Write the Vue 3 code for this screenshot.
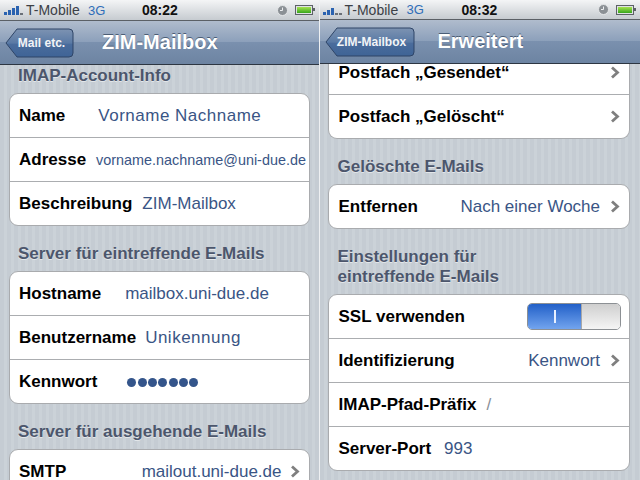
<script setup>
const phones = [
  {
    id: 'left',
    carrier: 'T-Mobile',
    time: '08:22',
    bars: [3, 5, 7, 9, 2],
    back: 'Mail etc.',
    title: 'ZIM-Mailbox',
    groups: [
      {
        label: ['IMAP-Account-Info'],
        rows: [
          { key: 'Name', value: 'Vorname Nachname', gap: 33, wide: true },
          { key: 'Adresse', value: 'vorname.nachname@uni-due.de', gap: 10, small: true },
          { key: 'Beschreibung', value: 'ZIM-Mailbox', gap: 10 }
        ]
      },
      {
        label: ['Server für eintreffende E-Mails'],
        rows: [
          { key: 'Hostname', value: 'mailbox.uni-due.de', gap: 24 },
          { key: 'Benutzername', value: 'Unikennung', gap: 9, wide: true },
          { key: 'Kennwort', dots: 7, gap: 30 }
        ]
      },
      {
        label: ['Server für ausgehende E-Mails'],
        rows: [{ key: 'SMTP', value: 'mailout.uni-due.de', chevron: true }]
      }
    ]
  },
  {
    id: 'right',
    carrier: 'T-Mobile',
    time: '08:32',
    bars: [3, 5, 7, 2, 2],
    back: 'ZIM-Mailbox',
    title: 'Erweitert',
    groups: [
      {
        cut: true,
        rows: [
          { key: 'Postfach „Gesendet“', chevron: true },
          { key: 'Postfach „Gelöscht“', chevron: true }
        ]
      },
      {
        label: ['Gelöschte E-Mails'],
        rows: [{ key: 'Entfernen', value: 'Nach einer Woche', chevron: true }]
      },
      {
        label: ['Einstellungen für', 'eintreffende E-Mails'],
        rows: [
          { key: 'SSL verwenden', toggle: true },
          { key: 'Identifizierung', value: 'Kennwort', chevron: true },
          { key: 'IMAP-Pfad-Präfix', value: '/', gap: 10, muted: true },
          { key: 'Server-Port', value: '993', gap: 13 }
        ]
      }
    ]
  }
]
</script>

<template>
  <div class="screens">
    <section v-for="phone in phones" :key="phone.id" class="phone" :class="phone.id">
      <div class="status">
        <div class="signal">
          <span v-for="(h, i) in phone.bars" :key="i" class="bar" :class="{ off: h === 2 }" :style="{ height: h + 'px' }"></span>
        </div>
        <span class="carrier">{{ phone.carrier }}</span>
        <span class="net">3G</span>
        <span class="time">{{ phone.time }}</span>
        <svg class="clock" width="11" height="11" viewBox="0 0 11 11">
          <circle cx="5.5" cy="5.5" r="5" fill="#8b9095" stroke="#e4e6e8" />
          <path d="M5.5 2.5 V5.5 H3" fill="none" stroke="#eceef0" stroke-width="1" />
        </svg>
        <span class="battery"><span class="charge"></span></span>
      </div>

      <header class="nav">
        <div class="back">
          <svg class="back-shape" width="100%" height="30" preserveAspectRatio="none" :viewBox="phone.id === 'left' ? '0 0 69 30' : '0 0 90 30'">
            <defs>
              <linearGradient :id="'bk-' + phone.id" x1="0" y1="0" x2="0" y2="1">
                <stop offset="0" stop-color="#7d93b2" />
                <stop offset="0.5" stop-color="#5a7aa5" />
                <stop offset="0.55" stop-color="#4a6c9c" />
                <stop offset="1" stop-color="#3f6496" />
              </linearGradient>
            </defs>
            <path
              :d="phone.id === 'left'
                ? 'M1 15 L12 1 H64 Q68 1 68 5 V25 Q68 29 64 29 H12 Z'
                : 'M1 15 L12 1 H85 Q89 1 89 5 V25 Q89 29 85 29 H12 Z'"
              :fill="'url(#bk-' + phone.id + ')'"
              stroke="#2f4567"
              vector-effect="non-scaling-stroke"
            />
          </svg>
          <span class="back-label">{{ phone.back }}</span>
        </div>
        <h1 class="title">{{ phone.title }}</h1>
      </header>

      <main class="content">
        <template v-for="(group, g) in phone.groups" :key="g">
          <div v-if="group.label" class="group-label">
            <div v-for="line in group.label" :key="line">{{ line }}</div>
          </div>
          <div class="card" :class="{ cut: group.cut }">
            <div v-for="row in group.rows" :key="row.key" class="row">
              <span class="key">{{ row.key }}</span>
              <span v-if="row.gap" :style="{ width: row.gap + 'px' }" class="spacer"></span>
              <span v-else class="grow"></span>
              <span v-if="row.value" class="value" :class="{ small: row.small, muted: row.muted, wide: row.wide }">{{ row.value }}</span>
              <span v-if="row.dots" class="dots">
                <span v-for="n in row.dots" :key="n" class="dot"></span>
              </span>
              <div v-if="row.toggle" class="toggle">
                <div class="toggle-on"><span class="toggle-mark"></span></div>
                <div class="toggle-knob"></div>
              </div>
              <svg v-if="row.chevron" class="chevron" width="10" height="13" viewBox="0 0 10 13">
                <path d="M2 1.5 L7.5 6.5 L2 11.5" fill="none" stroke="#7f7f7f" stroke-width="2.8" />
              </svg>
            </div>
          </div>
        </template>
      </main>
    </section>
  </div>
</template>

<style scoped>
.screens {
  display: flex;
  width: 640px;
  height: 480px;
  overflow: hidden;
  font-family: "Liberation Sans", Arial, sans-serif;
  background: #fff;
}

.phone {
  width: 320px;
  height: 480px;
  overflow: hidden;
  display: flex;
  flex-direction: column;
  background: repeating-linear-gradient(90deg, #c5ccd3 0, #c5ccd3 4px, #cbd2d8 4px, #cbd2d8 7px);
}

.phone.left {
  width: 319px;
}

.phone.right {
  width: 321px;
  border-left: 1px solid #eef0f2;
}

.status {
  height: 20px;
  flex: none;
  display: flex;
  align-items: center;
  padding: 0 5px 0 4px;
  background: linear-gradient(#f4f5f6, #c6cbd0);
  border-bottom: 1px solid #5b6066;
  color: #3c4046;
  font-size: 14px;
}

.right .status {
  height: 19px;
  padding-left: 3px;
}

.signal {
  display: flex;
  align-items: flex-end;
  gap: 1px;
  width: 19px;
  height: 10px;
}

.bar {
  width: 3px;
  background: #2a62b0;
}

.bar.off {
  background: #6a7078;
}

.carrier {
  margin-left: 3px;
  width: 62px;
}

.net {
  color: #2f6db8;
  width: 54px;
  font-size: 13px;
}

.right .net {
  width: 55px;
}

.time {
  color: #111;
  font-weight: bold;
  font-size: 14px;
  width: 103px;
}

.clock {
  flex: none;
  margin-left: auto;
}

.battery {
  position: relative;
  width: 18px;
  height: 10px;
  margin: 0 1px 0 7px;
  padding: 1px;
  box-sizing: border-box;
  border: 1px solid #5c6166;
  background: #dfe2e4;
}

.battery::after {
  content: "";
  position: absolute;
  top: 2px;
  right: -3px;
  width: 2px;
  height: 3px;
  background: #5c6166;
}

.charge {
  display: block;
  height: 100%;
  background: linear-gradient(#a6e24f, #36a61c);
}

.nav {
  height: 44px;
  flex: none;
  display: flex;
  align-items: center;
  padding-left: 5px;
  background: linear-gradient(#b0bccd 0, #8b9fba 50%, #7a90ae 50%, #6d84a2 100%);
  border-bottom: 1px solid #2d3642;
  box-sizing: border-box;
}

.back {
  position: relative;
  width: 69px;
  height: 30px;
  flex: none;
}

.right .back {
  width: 90px;
}

.back-shape {
  display: block;
  width: 100%;
}

.back-label {
  position: absolute;
  top: 0;
  left: 8px;
  right: 4px;
  line-height: 30px;
  text-align: center;
  color: #f2f4f7;
  font-size: 12px;
  font-weight: bold;
  white-space: nowrap;
}

.title {
  margin: 0 0 0 28px;
  color: #fff;
  font-size: 20px;
  font-weight: bold;
  text-shadow: 0 -1px 0 #4b5d75;
}

.right .title {
  margin-left: 23px;
}

.content {
  flex: 1;
  padding: 0 9px;
  overflow: hidden;
}

.right .content {
  padding: 0 10px 0 8px;
}

.group-label {
  margin: 18px 0 7px;
  padding-left: 9px;
  color: #4c566c;
  font-size: 17px;
  font-weight: bold;
  line-height: 20px;
  text-shadow: 0 1px 0 #e3e7ea;
}

.right .group-label {
  padding-left: 10px;
}

.left .group-label:first-child {
  margin-top: 1px;
}

.card {
  background: #fff;
  border: 1px solid #a9abae;
  border-radius: 9px;
  overflow: hidden;
}

.card.cut {
  border-top: 0;
  border-radius: 0 0 9px 9px;
}

.row {
  height: 44px;
  box-sizing: border-box;
  display: flex;
  align-items: center;
  padding: 0 9px;
  border-bottom: 1px solid #abadb0;
}

.right .row {
  padding: 0 9px 0 10px;
}

.row:last-child {
  border-bottom: 0;
  height: 43px;
}

.right .cut .row:first-child {
  height: 31px;
  padding-bottom: 13px;
}

.key {
  color: #000;
  font-size: 17px;
  font-weight: bold;
  white-space: nowrap;
}

.spacer {
  flex: none;
}

.grow {
  flex: 1;
}

.value {
  color: #3a5585;
  font-size: 17px;
  white-space: nowrap;
}

.value.wide {
  letter-spacing: 0.5px;
}

.value.small {
  font-size: 14.4px;
}

.value.muted {
  color: #8a8f98;
}

.dots {
  display: flex;
  gap: 1.33px;
  margin-top: 2px;
}

.dot {
  width: 9px;
  height: 9px;
  border-radius: 50%;
  background: #34558b;
}

.chevron {
  flex: none;
  margin-left: 10px;
}

.left .chevron {
  margin-left: 8px;
}

.toggle {
  width: 94px;
  height: 27px;
  margin-right: -1px;
  display: flex;
  border: 1px solid #8c9094;
  border-radius: 5px;
  overflow: hidden;
  box-sizing: border-box;
}

.toggle-on {
  width: 53px;
  display: flex;
  align-items: center;
  justify-content: center;
  background: linear-gradient(#2260c8, #72a4ee);
}

.toggle-mark {
  width: 2px;
  height: 13px;
  background: #e8f0ff;
}

.toggle-knob {
  flex: 1;
  background: linear-gradient(#cfcfcf, #f5f5f5);
  border-left: 1px solid #a8a8a8;
}
</style>
